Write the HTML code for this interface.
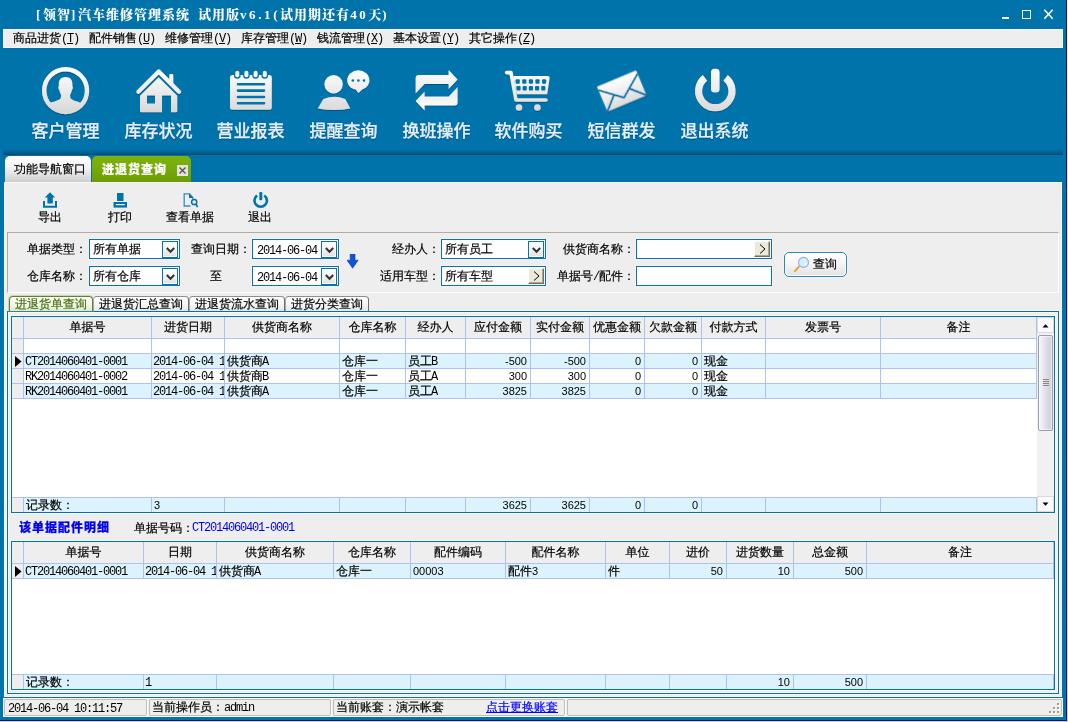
<!DOCTYPE html>
<html lang="zh-CN"><head><meta charset="utf-8"><title>汽车维修管理系统</title><style>
*{box-sizing:border-box;margin:0;padding:0}
html,body{width:1068px;height:722px;overflow:hidden;background:#C8D2E6}
body{background:linear-gradient(#F4F8FF,#CCD8EA 35%,#C2CCE0)}
body{position:relative;font-family:"Liberation Sans","WenQuanYi Zen Hei",sans-serif;font-size:12px;color:#000;line-height:14px;-webkit-text-stroke-width:0.2px}
.a{position:absolute;white-space:pre}
#win{will-change:transform;left:0;top:0;width:1067px;height:721px;background:#0073AA;border-right:1px solid #001A60;border-bottom:1px solid #001A60}
.ttl{-webkit-text-stroke-width:0;color:#fff;font:900 13px/16px "Liberation Serif","Noto Serif CJK SC",serif;top:7px;letter-spacing:1px}
.ttl i{font-style:normal;font-weight:bold;letter-spacing:2.6px}
#menu{left:3px;top:29px;width:1060px;height:19px;background:#EEEEEE;box-shadow:inset 0 0 0 1px #FAF6F2}
.mi{top:2px}
.m,.n{-webkit-text-stroke-width:0}
.m1{margin-left:1px}
.m{font-family:"Liberation Mono","WenQuanYi Zen Hei",monospace;font-size:12px;letter-spacing:-1.2px}
.big{-webkit-text-stroke-width:0.25px;color:#E4F1FA;font:500 17px/20px "Liberation Sans","Noto Sans CJK SC",sans-serif;top:122px;width:93px;text-align:center;text-shadow:0 1px 1px rgba(0,40,80,.55)}
#band{left:3px;top:148px;width:1060px;height:7px;background:linear-gradient(#0073AA,#0072A8 20%,#00669A 50%,#004C74)}
#tab1{left:5px;top:156px;width:86px;height:26px;border-radius:5px 5px 0 0;background:linear-gradient(#FFFFFF,#F2F2F2 45%,#CFCFCF);}
#tab2{left:92px;top:156px;width:99px;height:26px;border-radius:5px 5px 0 0;background:linear-gradient(#7DB20C,#76AA06 50%,#6C9C02);}
#content{left:3px;top:182px;width:1060px;height:515px}
#cbg{left:1px;top:0;width:1058px;height:515px;background:#EEEEEE;box-shadow:inset 0 0 0 1px #FAF6F2}
#status{left:3px;top:698px;width:1060px;height:19px;background:#EEEEEE;box-shadow:inset 1px 1px 0 #FCFAF8}
.sp{top:1px;height:17px;border:1px solid #C2BEB2;border-radius:2px;background:#EEEEEE;box-shadow:1px 1px 0 #fff}
.tbl{top:28px;width:70px;text-align:center}
.lbl{text-align:right}
.combo{height:20px;background:#fff;border:1px solid #0473B2;box-shadow:0 0 0 1px #F7F2EE}
.dd{top:1px;width:16px;height:17px;border:1px solid #0473B2;background:linear-gradient(#FFFFFF,#F4F4F4 45%,#E0E0E0);box-shadow:inset 0 0 0 1px #fff}
.gt{top:1px;width:16px;height:16px;background:#ECE9D8;border:1px solid;border-color:#fff #716F64 #716F64 #fff;box-shadow:inset -1px -1px 0 #ACA899}
.grid{border:1px solid #0073AA;background:#fff;overflow:hidden;box-shadow:0 0 0 1px #FAF6F2}
.row{left:0;height:15px;border-bottom:1px solid #ADC2F0}
.c>.m:first-child{margin-left:-1px}
.c{top:0;height:100%;border-right:1px solid #ADC2F0;overflow:hidden;padding:0 2px}
.hd{background:#EEEEEE;text-align:center;line-height:20px;padding-top:0}
.ind{background:#EEEEEE}
.alt{background:#DCF3FD}
.r{text-align:right;padding-right:3px}
.n{font-size:11px}
.stab{top:114px;height:15px;border:1px solid #8E8E8E;border-right-color:#6E6E6E;border-left-color:#A8A8A8;border-bottom:none;border-radius:4px 4px 0 0;background:linear-gradient(#fff,#F6F6F6 50%,#E6E6E6);text-align:center;line-height:15px}
</style></head><body>
<div id="win" class="a">
<div class="a ttl" style="left:36px"><i>[</i>领智<i>]</i>汽车维修管理系统</div>
<div class="a ttl" style="left:198px">试用版<i>v6.1(</i>试用期还有<i>40</i>天<i>)</i></div>
<div class="a" style="left:1002px;top:17px;width:7px;height:2px;background:#fff"></div>
<div class="a" style="left:1022px;top:10px;width:9px;height:9px;border:1px solid #fff"></div>
<svg class="a" style="left:1043px;top:9px" width="11" height="11" viewBox="0 0 11 11"><path d="M1.3 0.8L9.7 9.8M9.7 0.8L1.3 9.8" stroke="#fff" stroke-width="1.5" fill="none"/></svg>
<div id="menu" class="a">
<div class="a mi" style="left:10px">商品进货<span class="m">(<u>T</u>)</span></div>
<div class="a mi" style="left:86px">配件销售<span class="m">(<u>U</u>)</span></div>
<div class="a mi" style="left:162px">维修管理<span class="m">(<u>V</u>)</span></div>
<div class="a mi" style="left:238px">库存管理<span class="m">(<u>W</u>)</span></div>
<div class="a mi" style="left:314px">钱流管理<span class="m">(<u>X</u>)</span></div>
<div class="a mi" style="left:390px">基本设置<span class="m">(<u>Y</u>)</span></div>
<div class="a mi" style="left:466px">其它操作<span class="m">(<u>Z</u>)</span></div>
</div>
<div class="a big" style="left:19px">客户管理</div>
<div class="a big" style="left:112px">库存状况</div>
<div class="a big" style="left:204px">营业报表</div>
<div class="a big" style="left:297px">提醒查询</div>
<div class="a big" style="left:390px">换班操作</div>
<div class="a big" style="left:482px">软件购买</div>
<div class="a big" style="left:575px">短信群发</div>
<div class="a big" style="left:668px">退出系统</div>
<svg class="a" style="left:0;top:60px" width="800" height="60" viewBox="0 60 800 60">
<defs>
<linearGradient id="ig" gradientUnits="userSpaceOnUse" x1="0" y1="68" x2="0" y2="113"><stop offset="0" stop-color="#FFFFFF"/><stop offset="1" stop-color="#D8D8D8"/></linearGradient>
<filter id="sh" x="-10%" y="-10%" width="120%" height="130%"><feDropShadow dx="0" dy="1" stdDeviation="0.7" flood-color="#002848" flood-opacity="0.45"/></filter>
<linearGradient id="eg" x1="0" y1="0" x2="0" y2="1"><stop offset="0" stop-color="#FFFFFF"/><stop offset="1" stop-color="#DCDCDC"/></linearGradient>
<clipPath id="cc"><circle cx="65.6" cy="90.6" r="20"/></clipPath>
</defs>
<g fill="url(#ig)" stroke="none" filter="url(#sh)">
<!-- customer -->
<circle cx="65.6" cy="90.6" r="21.4" fill="none" stroke="url(#ig)" stroke-width="4.5"/>
<g clip-path="url(#cc)"><path d="M65.6 77C70 77 72.4 79.8 72.4 83.6V86.2C73.2 86.6 73.1 88.9 72 89.7C71.5 92.6 70.3 94.7 69.2 96V99.5H62V96C60.9 94.7 59.7 92.6 59.2 89.7C58.1 88.9 58 86.6 58.8 86.2V83.6C58.8 79.8 61.2 77 65.6 77Z"/><path d="M44 116V104.6C50 102.6 57 101 60.6 98.4L61.6 92H69.6L70.6 98.4C74 101 81 102.6 87.5 104.6V116Z"/></g>
<!-- house -->
<path d="M138.4 91.8L158.7 71.6L179 91.8" fill="none" stroke="url(#ig)" stroke-width="4.2" stroke-linecap="round" stroke-linejoin="round"/>
<rect x="169.3" y="74" width="4" height="11" rx="1"/>
<path fill-rule="evenodd" d="M140 95.8L158.7 77.2L177.3 95.8V111Q177.3 112.3 176 112.3H141.3Q140 112.3 140 111ZM147 95.6H155V103.6H147ZM162 95.6H171V112.3H162Z"/>
<!-- notepad -->
<rect x="230" y="75" width="41.8" height="34.7" rx="2.5"/>
</g>
<g>
<g fill="#0073AA"><rect x="234" y="69.4" width="6.6" height="9.4" rx="3.3"/><rect x="243.1" y="69.4" width="6.6" height="9.4" rx="3.3"/><rect x="252.3" y="69.4" width="6.6" height="9.4" rx="3.3"/><rect x="261.5" y="69.4" width="6.6" height="9.4" rx="3.3"/></g>
<g fill="#FCFCFC"><rect x="235.3" y="70.7" width="4" height="6.6" rx="2"/><rect x="244.4" y="70.7" width="4" height="6.6" rx="2"/><rect x="253.6" y="70.7" width="4" height="6.6" rx="2"/><rect x="262.8" y="70.7" width="4" height="6.6" rx="2"/></g>
<path d="M238 84.2H264M238 90.6H264M238 97H264M238 103.2H264" stroke="#0073AA" stroke-width="2.6" stroke-linecap="round" fill="none"/>
</g>
<g fill="url(#ig)" filter="url(#sh)">
<!-- people -->
<circle cx="333.6" cy="84.2" r="9.2"/>
<path d="M323.3 99Q334.3 94.6 345.3 99L350.4 108.4Q334 111.6 317.7 108.4Z"/>
<ellipse cx="358.3" cy="80.2" rx="11.1" ry="9.9"/>
<path d="M355 88.5L358.4 93L365.5 86.5Z"/>
<!-- swap -->
<path id="sw" d="M415.6 93.6V78Q415.6 75 418.6 75H448.6V69.9L457.6 79.5L448.6 89V84H424.5Z"/>
<use href="#sw" transform="rotate(180 436.6 90.25)"/>
<!-- cart -->
<path d="M506.6 72.6H511L516 100H546" fill="none" stroke="url(#ig)" stroke-width="3.6" stroke-linecap="round" stroke-linejoin="round"/>
<path d="M513.4 76H547.7Q549.9 76 549.6 78L547.2 94.2H516.7Z"/>
<circle cx="519" cy="107.5" r="3.3"/><circle cx="537.4" cy="107.5" r="3.3"/>
</g>
<g fill="#0073AA">
<circle cx="352.8" cy="80.5" r="1.3"/><circle cx="358.4" cy="80.5" r="1.3"/><circle cx="364" cy="80.5" r="1.3"/>
<rect x="515.6" y="79.3" width="4.2" height="4.4" rx="1"/><rect x="522.2" y="79.3" width="4.2" height="4.4" rx="1"/><rect x="528.8" y="79.3" width="4.2" height="4.4" rx="1"/><rect x="535.4" y="79.3" width="4.2" height="4.4" rx="1"/><rect x="542" y="79.3" width="4.2" height="4.4" rx="1"/>
<rect x="516.4" y="86.1" width="4.2" height="4.4" rx="1"/><rect x="522.6" y="86.1" width="4.2" height="4.4" rx="1"/><rect x="528.8" y="86.1" width="4.2" height="4.4" rx="1"/><rect x="535" y="86.1" width="4.2" height="4.4" rx="1"/><rect x="541.2" y="86.1" width="4.2" height="4.4" rx="1"/>
</g>
<!-- envelope -->
<g transform="translate(621.75 91) rotate(-22.7)" filter="url(#sh)">
<rect x="-21.2" y="-13.5" width="42.4" height="27" fill="url(#eg)"/>
<path d="M-21.2 -9.8L-0.5 7L21.2 -9.8M-21.2 13.5L-9.2 1.2M21.2 13.5L8.6 1.2" stroke="#0073AA" stroke-width="1.9" fill="none"/>
</g>
<!-- power -->
<g filter="url(#sh)">
<path d="M725.58 77.84A16.7 16.7 0 1 1 705.02 77.84" fill="none" stroke="url(#ig)" stroke-width="7.2"/>
</g>
<rect x="708.4" y="65" width="13.8" height="30.4" rx="6" fill="#0073AA"/>
<rect x="711" y="68.8" width="8.6" height="23.8" rx="3.6" fill="url(#ig)"/>
</svg>

<div id="band" class="a"></div>
<div id="tab1" class="a"><div class="a" style="left:9px;top:6px">功能导航窗口</div></div>
<div id="tab2" class="a"><div class="a" style="left:10px;top:6px;color:#fff;font:900 12px/16px 'Liberation Sans','Noto Sans CJK SC',sans-serif;letter-spacing:1px">进退货查询</div><svg class="a" style="left:85px;top:9px" width="11" height="11" viewBox="0 0 11 11"><rect width="11" height="11" fill="#E4E4DC"/><path d="M2.5 2.5L8.5 8.5M8.5 2.5L2.5 8.5" stroke="#555" stroke-width="1.35"/></svg></div>
<div id="content" class="a"><div id="cbg" class="a"></div>
<div class="a tbl" style="left:12px">导出</div>
<div class="a tbl" style="left:82px">打印</div>
<div class="a tbl" style="left:152px">查看单据</div>
<div class="a tbl" style="left:222px">退出</div>
<svg class="a" style="left:0;top:0" width="300" height="30" viewBox="3 182 300 30">
<g fill="#0073AA">
<path d="M44 201V206.7H56V201" fill="none" stroke="#0073AA" stroke-width="2"/>
<path d="M50 192.2L55.2 197.6H52.8V203.4H47.4V197.6H44.8Z"/>
<rect x="117" y="193" width="6.5" height="8"/><rect x="113.5" y="202" width="13.5" height="5.6"/><rect x="115.8" y="204" width="9" height="1.2" fill="#F4F8FA"/>
<path d="M190.5 206H184.2V193.8H189.4L192.8 197.6V199.2" fill="none" stroke="#3A8ABC" stroke-width="1.3"/>
<path d="M189 193.2L193.4 197.9H189Z"/>
<circle cx="194.2" cy="202" r="2.6" fill="none" stroke="#0073AA" stroke-width="1.5"/><path d="M196 204.2L197.6 207.2" stroke="#0073AA" stroke-width="1.7" fill="none"/>
<path d="M264.26 195.52A6.2 6.2 0 1 1 257.14 195.52" fill="none" stroke="#0073AA" stroke-width="2.6"/>
<rect x="259.3" y="192" width="3" height="8.3" rx="1"/>
</g>
</svg>

<div class="a" style="left:4px;top:50px;width:1052px;height:61px;border:1px solid;border-color:#B0ACA0 #fff #fff #B0ACA0"></div>
<div class="a lbl" style="left:-16px;top:60px;width:100px">单据类型：</div>
<div class="a lbl" style="left:-16px;top:87px;width:100px">仓库名称：</div>
<div class="a lbl" style="left:148px;top:60px;width:100px">查询日期：</div>
<div class="a" style="left:207px;top:87px">至</div>
<div class="a lbl" style="left:337px;top:60px;width:100px">经办人：</div>
<div class="a lbl" style="left:337px;top:87px;width:100px">适用车型：</div>
<div class="a lbl" style="left:532px;top:60px;width:100px">供货商名称：</div>
<div class="a lbl" style="left:532px;top:87px;width:100px">单据号<span class="m">/</span>配件：</div>
<div class="a combo" style="left:86px;top:57px;width:91px"><div class="a" style="left:3px;top:2px">所有单据</div><div class="a dd" style="left:72px"><svg class="a" style="left:3px;top:5px" width="9" height="7" viewBox="0 0 9 7"><path d="M0.8 1L4.5 4.8L8.2 1" stroke="#333" stroke-width="2" fill="none"/></svg></div></div>
<div class="a combo" style="left:86px;top:84px;width:91px"><div class="a" style="left:3px;top:2px">所有仓库</div><div class="a dd" style="left:72px"><svg class="a" style="left:3px;top:5px" width="9" height="7" viewBox="0 0 9 7"><path d="M0.8 1L4.5 4.8L8.2 1" stroke="#333" stroke-width="2" fill="none"/></svg></div></div>
<div class="a combo" style="left:249px;top:57px;width:87px"><div class="a m" style="left:4px;top:4px">2014-06-04</div><div class="a dd" style="left:68px"><svg class="a" style="left:3px;top:5px" width="9" height="7" viewBox="0 0 9 7"><path d="M0.8 1L4.5 4.8L8.2 1" stroke="#333" stroke-width="2" fill="none"/></svg></div></div>
<div class="a combo" style="left:249px;top:84px;width:87px"><div class="a m" style="left:4px;top:4px">2014-06-04</div><div class="a dd" style="left:68px"><svg class="a" style="left:3px;top:5px" width="9" height="7" viewBox="0 0 9 7"><path d="M0.8 1L4.5 4.8L8.2 1" stroke="#333" stroke-width="2" fill="none"/></svg></div></div>
<div class="a combo" style="left:438px;top:57px;width:105px"><div class="a" style="left:3px;top:2px">所有员工</div><div class="a dd" style="left:86px"><svg class="a" style="left:3px;top:5px" width="9" height="7" viewBox="0 0 9 7"><path d="M0.8 1L4.5 4.8L8.2 1" stroke="#333" stroke-width="2" fill="none"/></svg></div></div>
<div class="a combo" style="left:438px;top:84px;width:105px"><div class="a" style="left:3px;top:2px">所有车型</div><div class="a gt" style="left:86px"><svg class="a" style="left:4px;top:2px" width="7" height="10" viewBox="0 0 7 10"><path d="M1 0.5L6 5L1 9.5" stroke="#000" stroke-width="1" fill="none"/></svg></div></div>
<div class="a combo" style="left:633px;top:57px;width:136px"><div class="a gt" style="left:117px"><svg class="a" style="left:4px;top:2px" width="7" height="10" viewBox="0 0 7 10"><path d="M1 0.5L6 5L1 9.5" stroke="#000" stroke-width="1" fill="none"/></svg></div></div>
<div class="a combo" style="left:633px;top:84px;width:136px"></div>
<svg class="a" style="left:344px;top:72px" width="12" height="15" viewBox="0 0 12 15"><path d="M3.2 0h4.8v6.2h3.2L5.6 14.2L0 6.2h3.2z" fill="#0E56D4" stroke="#0A3CA8" stroke-width="0.6"/></svg>
<div class="a" style="left:781px;top:70px;width:63px;height:25px;border:1px solid #2A86BC;border-radius:5px;background:linear-gradient(#FFFFFF,#F6F6F6 45%,#E2E2E2);box-shadow:inset 0 0 0 1px #fff,0 0 0 1px #F7F2EE"><svg class="a" style="left:8px;top:3px" width="18" height="18" viewBox="0 0 18 18"><path d="M5.9 10.7L1.9 15.1" stroke="#E8A030" stroke-width="1.9" stroke-linecap="round"/><circle cx="10.5" cy="6.4" r="5" fill="#CDF4FA" stroke="#A4A6E6" stroke-width="1.1"/><circle cx="12.6" cy="8.3" r="1.2" fill="#fff"/></svg><div class="a" style="left:28px;top:4px">查询</div></div>
<div class="a" style="left:4px;top:129px;width:1052px;height:383px;border:1px solid #0073AA;box-shadow:0 0 0 1px #FAF6F2,inset 0 0 0 1px #FAF6F2"></div>
<div class="a stab" style="left:6px;width:84px;color:#47700C;border-color:#5F8420;background:linear-gradient(#fff,#F4F8EE 50%,#DDE9CC);box-shadow:0 0 0 1px rgba(140,170,90,.35)">进退货单查询</div>
<div class="a stab" style="left:90px;width:96px">进退货汇总查询</div>
<div class="a stab" style="left:186px;width:96px">进退货流水查询</div>
<div class="a stab" style="left:282px;width:84px">进货分类查询</div>
<div class="a grid" style="left:8px;top:134px;width:1044px;height:197px">
<div class="a row" style="top:0;height:22px;width:1042px;background:#EEEEEE"><div class="a c ind hd" style="left:0px;width:12px"></div><div class="a c hd" style="left:12px;width:128px">单据号</div><div class="a c hd" style="left:140px;width:73px">进货日期</div><div class="a c hd" style="left:213px;width:115px">供货商名称</div><div class="a c hd" style="left:328px;width:66px">仓库名称</div><div class="a c hd" style="left:394px;width:60px">经办人</div><div class="a c hd" style="left:454px;width:65px">应付金额</div><div class="a c hd" style="left:519px;width:59px">实付金额</div><div class="a c hd" style="left:578px;width:55px">优惠金额</div><div class="a c hd" style="left:633px;width:57px">欠款金额</div><div class="a c hd" style="left:690px;width:64px">付款方式</div><div class="a c hd" style="left:754px;width:115px">发票号</div><div class="a c hd" style="left:869px;width:156px">备注</div></div>
<div class="a row" style="top:22px;width:1042px"><div class="a c ind" style="left:0px;width:12px"></div><div class="a c" style="left:12px;width:128px"></div><div class="a c" style="left:140px;width:73px"></div><div class="a c" style="left:213px;width:115px"></div><div class="a c" style="left:328px;width:66px"></div><div class="a c" style="left:394px;width:60px"></div><div class="a c" style="left:454px;width:65px"></div><div class="a c" style="left:519px;width:59px"></div><div class="a c" style="left:578px;width:55px"></div><div class="a c" style="left:633px;width:57px"></div><div class="a c" style="left:690px;width:64px"></div><div class="a c" style="left:754px;width:115px"></div><div class="a c" style="left:869px;width:156px"></div></div>
<div class="a row alt" style="top:37px;width:1042px"><div class="a c ind" style="left:0px;width:12px"><svg class="a" style="left:3px;top:2px" width="7" height="11" viewBox="0 0 7 11"><path d="M0 0L6.5 5.5L0 11z" fill="#000"/></svg></div><div class="a c" style="left:12px;width:128px"><span class="m">CT2014060401-0001</span></div><div class="a c" style="left:140px;width:73px"><span class="m">2014-06-04 1</span></div><div class="a c" style="left:213px;width:115px">供货商<span class="m m1">A</span></div><div class="a c" style="left:328px;width:66px">仓库一</div><div class="a c" style="left:394px;width:60px">员工<span class="m m1">B</span></div><div class="a c r" style="left:454px;width:65px"><span class="n">-500</span></div><div class="a c r" style="left:519px;width:59px"><span class="n">-500</span></div><div class="a c r" style="left:578px;width:55px"><span class="n">0</span></div><div class="a c r" style="left:633px;width:57px"><span class="n">0</span></div><div class="a c" style="left:690px;width:64px">现金</div><div class="a c" style="left:754px;width:115px"></div><div class="a c" style="left:869px;width:156px"></div></div>
<div class="a row" style="top:52px;width:1042px"><div class="a c ind" style="left:0px;width:12px"></div><div class="a c" style="left:12px;width:128px"><span class="m">RK2014060401-0002</span></div><div class="a c" style="left:140px;width:73px"><span class="m">2014-06-04 1</span></div><div class="a c" style="left:213px;width:115px">供货商<span class="m m1">B</span></div><div class="a c" style="left:328px;width:66px">仓库一</div><div class="a c" style="left:394px;width:60px">员工<span class="m m1">A</span></div><div class="a c r" style="left:454px;width:65px"><span class="n">300</span></div><div class="a c r" style="left:519px;width:59px"><span class="n">300</span></div><div class="a c r" style="left:578px;width:55px"><span class="n">0</span></div><div class="a c r" style="left:633px;width:57px"><span class="n">0</span></div><div class="a c" style="left:690px;width:64px">现金</div><div class="a c" style="left:754px;width:115px"></div><div class="a c" style="left:869px;width:156px"></div></div>
<div class="a row alt" style="top:67px;width:1042px"><div class="a c ind" style="left:0px;width:12px"></div><div class="a c" style="left:12px;width:128px"><span class="m">RK2014060401-0001</span></div><div class="a c" style="left:140px;width:73px"><span class="m">2014-06-04 1</span></div><div class="a c" style="left:213px;width:115px">供货商<span class="m m1">A</span></div><div class="a c" style="left:328px;width:66px">仓库一</div><div class="a c" style="left:394px;width:60px">员工<span class="m m1">A</span></div><div class="a c r" style="left:454px;width:65px"><span class="n">3825</span></div><div class="a c r" style="left:519px;width:59px"><span class="n">3825</span></div><div class="a c r" style="left:578px;width:55px"><span class="n">0</span></div><div class="a c r" style="left:633px;width:57px"><span class="n">0</span></div><div class="a c" style="left:690px;width:64px">现金</div><div class="a c" style="left:754px;width:115px"></div><div class="a c" style="left:869px;width:156px"></div></div>
<div class="a row alt" style="top:180px;height:15px;width:1042px;border-bottom:none;border-top:1px solid #ADC2F0"><div class="a c ind" style="left:0px;width:12px"></div><div class="a c" style="left:12px;width:128px">记录数：</div><div class="a c" style="left:140px;width:73px"><span class="n">3</span></div><div class="a c" style="left:213px;width:115px"></div><div class="a c" style="left:328px;width:66px"></div><div class="a c" style="left:394px;width:60px"></div><div class="a c r" style="left:454px;width:65px"><span class="n">3625</span></div><div class="a c r" style="left:519px;width:59px"><span class="n">3625</span></div><div class="a c r" style="left:578px;width:55px"><span class="n">0</span></div><div class="a c r" style="left:633px;width:57px"><span class="n">0</span></div><div class="a c" style="left:690px;width:64px"></div><div class="a c" style="left:754px;width:115px"></div><div class="a c" style="left:869px;width:156px"></div></div>
<div class="a" style="left:1025px;top:0;width:17px;height:195px;background:#F1F1F1">
<div class="a" style="left:0;top:0;width:17px;height:16px;background:#FBFBFB;border:1px solid #DADADA"><svg class="a" style="left:4px;top:6px" width="7" height="4" viewBox="0 0 7 4"><path d="M0.5 3.5L3.5 0.3L6.5 3.5Z" fill="#000"/></svg></div>
<div class="a" style="left:1px;top:18px;width:15px;height:96px;border:1px solid #9C9CB0;border-radius:2px;background:linear-gradient(90deg,#F6F6FA,#E2E2EC 45%,#CDCDDD);box-shadow:inset 0 0 0 1px rgba(255,255,255,.6)"><div class="a" style="left:4px;top:43px;width:6px;height:1px;background:#8E8672;box-shadow:0 2px 0 #8E8672,0 4px 0 #8E8672,0 6px 0 #8E8672"></div></div>
<div class="a" style="left:0;top:179px;width:17px;height:16px;background:#FBFBFB;border:1px solid #DADADA"><svg class="a" style="left:4px;top:5px" width="7" height="4" viewBox="0 0 7 4"><path d="M0.5 0.5L3.5 3.7L6.5 0.5Z" fill="#000"/></svg></div>
</div>

</div>
<div class="a" style="left:16px;top:338px;color:#0000F0;font:900 12px/16px 'Liberation Sans','Noto Sans CJK SC',sans-serif;letter-spacing:1px">该单据配件明细</div>
<div class="a" style="left:131px;top:339px">单据号码：</div><div class="a m" style="left:189px;top:339px;color:#0000F0">CT2014060401-0001</div>
<div class="a grid" style="left:8px;top:359px;width:1044px;height:149px">
<div class="a row" style="top:0;height:22px;width:1042px;background:#EEEEEE"><div class="a c ind hd" style="left:0px;width:12px"></div><div class="a c hd" style="left:12px;width:120px">单据号</div><div class="a c hd" style="left:132px;width:73px">日期</div><div class="a c hd" style="left:205px;width:117px">供货商名称</div><div class="a c hd" style="left:322px;width:77px">仓库名称</div><div class="a c hd" style="left:399px;width:95px">配件编码</div><div class="a c hd" style="left:494px;width:100px">配件名称</div><div class="a c hd" style="left:594px;width:64px">单位</div><div class="a c hd" style="left:658px;width:57px">进价</div><div class="a c hd" style="left:715px;width:67px">进货数量</div><div class="a c hd" style="left:782px;width:73px">总金额</div><div class="a c hd" style="left:855px;width:187px">备注</div></div>
<div class="a row alt" style="top:22px;width:1042px"><div class="a c ind" style="left:0px;width:12px"><svg class="a" style="left:3px;top:2px" width="7" height="11" viewBox="0 0 7 11"><path d="M0 0L6.5 5.5L0 11z" fill="#000"/></svg></div><div class="a c" style="left:12px;width:120px"><span class="m">CT2014060401-0001</span></div><div class="a c" style="left:132px;width:73px"><span class="m">2014-06-04 1</span></div><div class="a c" style="left:205px;width:117px">供货商<span class="m m1">A</span></div><div class="a c" style="left:322px;width:77px">仓库一</div><div class="a c" style="left:399px;width:95px"><span class="n">00003</span></div><div class="a c" style="left:494px;width:100px">配件<span class="n">3</span></div><div class="a c" style="left:594px;width:64px">件</div><div class="a c r" style="left:658px;width:57px"><span class="n">50</span></div><div class="a c r" style="left:715px;width:67px"><span class="n">10</span></div><div class="a c r" style="left:782px;width:73px"><span class="n">500</span></div><div class="a c" style="left:855px;width:187px"></div></div>
<div class="a row alt" style="top:132px;height:15px;width:1042px;border-bottom:none;border-top:1px solid #ADC2F0"><div class="a c ind" style="left:0px;width:12px"></div><div class="a c" style="left:12px;width:120px">记录数：</div><div class="a c" style="left:132px;width:73px"><span class="m">1</span></div><div class="a c" style="left:205px;width:117px"></div><div class="a c" style="left:322px;width:77px"></div><div class="a c" style="left:399px;width:95px"></div><div class="a c" style="left:494px;width:100px"></div><div class="a c" style="left:594px;width:64px"></div><div class="a c" style="left:658px;width:57px"></div><div class="a c r" style="left:715px;width:67px"><span class="n">10</span></div><div class="a c r" style="left:782px;width:73px"><span class="n">500</span></div><div class="a c" style="left:855px;width:187px"></div></div>
</div>
</div>
<div id="status" class="a">
<div class="a sp" style="left:1px;width:143px"><div class="a m" style="left:3px;top:2px">2014-06-04 10:11:57</div></div>
<div class="a sp" style="left:146px;width:182px"><div class="a" style="left:2px;top:0">当前操作员：<span class="m">admin</span></div></div>
<div class="a sp" style="left:330px;width:232px"><div class="a" style="left:2px;top:0">当前账套：演示帐套</div><div class="a" style="left:152px;top:0;color:#0000FF;text-decoration:underline">点击更换账套</div></div>
<div class="a sp" style="left:564px;width:495px"></div>
<div class="a" style="left:1054px;top:5px;width:2px;height:2px;background:#A29E8C;box-shadow:1px 1px 0 #fff"></div><div class="a" style="left:1050px;top:9px;width:2px;height:2px;background:#A29E8C;box-shadow:1px 1px 0 #fff"></div><div class="a" style="left:1054px;top:9px;width:2px;height:2px;background:#A29E8C;box-shadow:1px 1px 0 #fff"></div><div class="a" style="left:1046px;top:13px;width:2px;height:2px;background:#A29E8C;box-shadow:1px 1px 0 #fff"></div><div class="a" style="left:1050px;top:13px;width:2px;height:2px;background:#A29E8C;box-shadow:1px 1px 0 #fff"></div><div class="a" style="left:1054px;top:13px;width:2px;height:2px;background:#A29E8C;box-shadow:1px 1px 0 #fff"></div>
</div>
</div>
</body></html>
